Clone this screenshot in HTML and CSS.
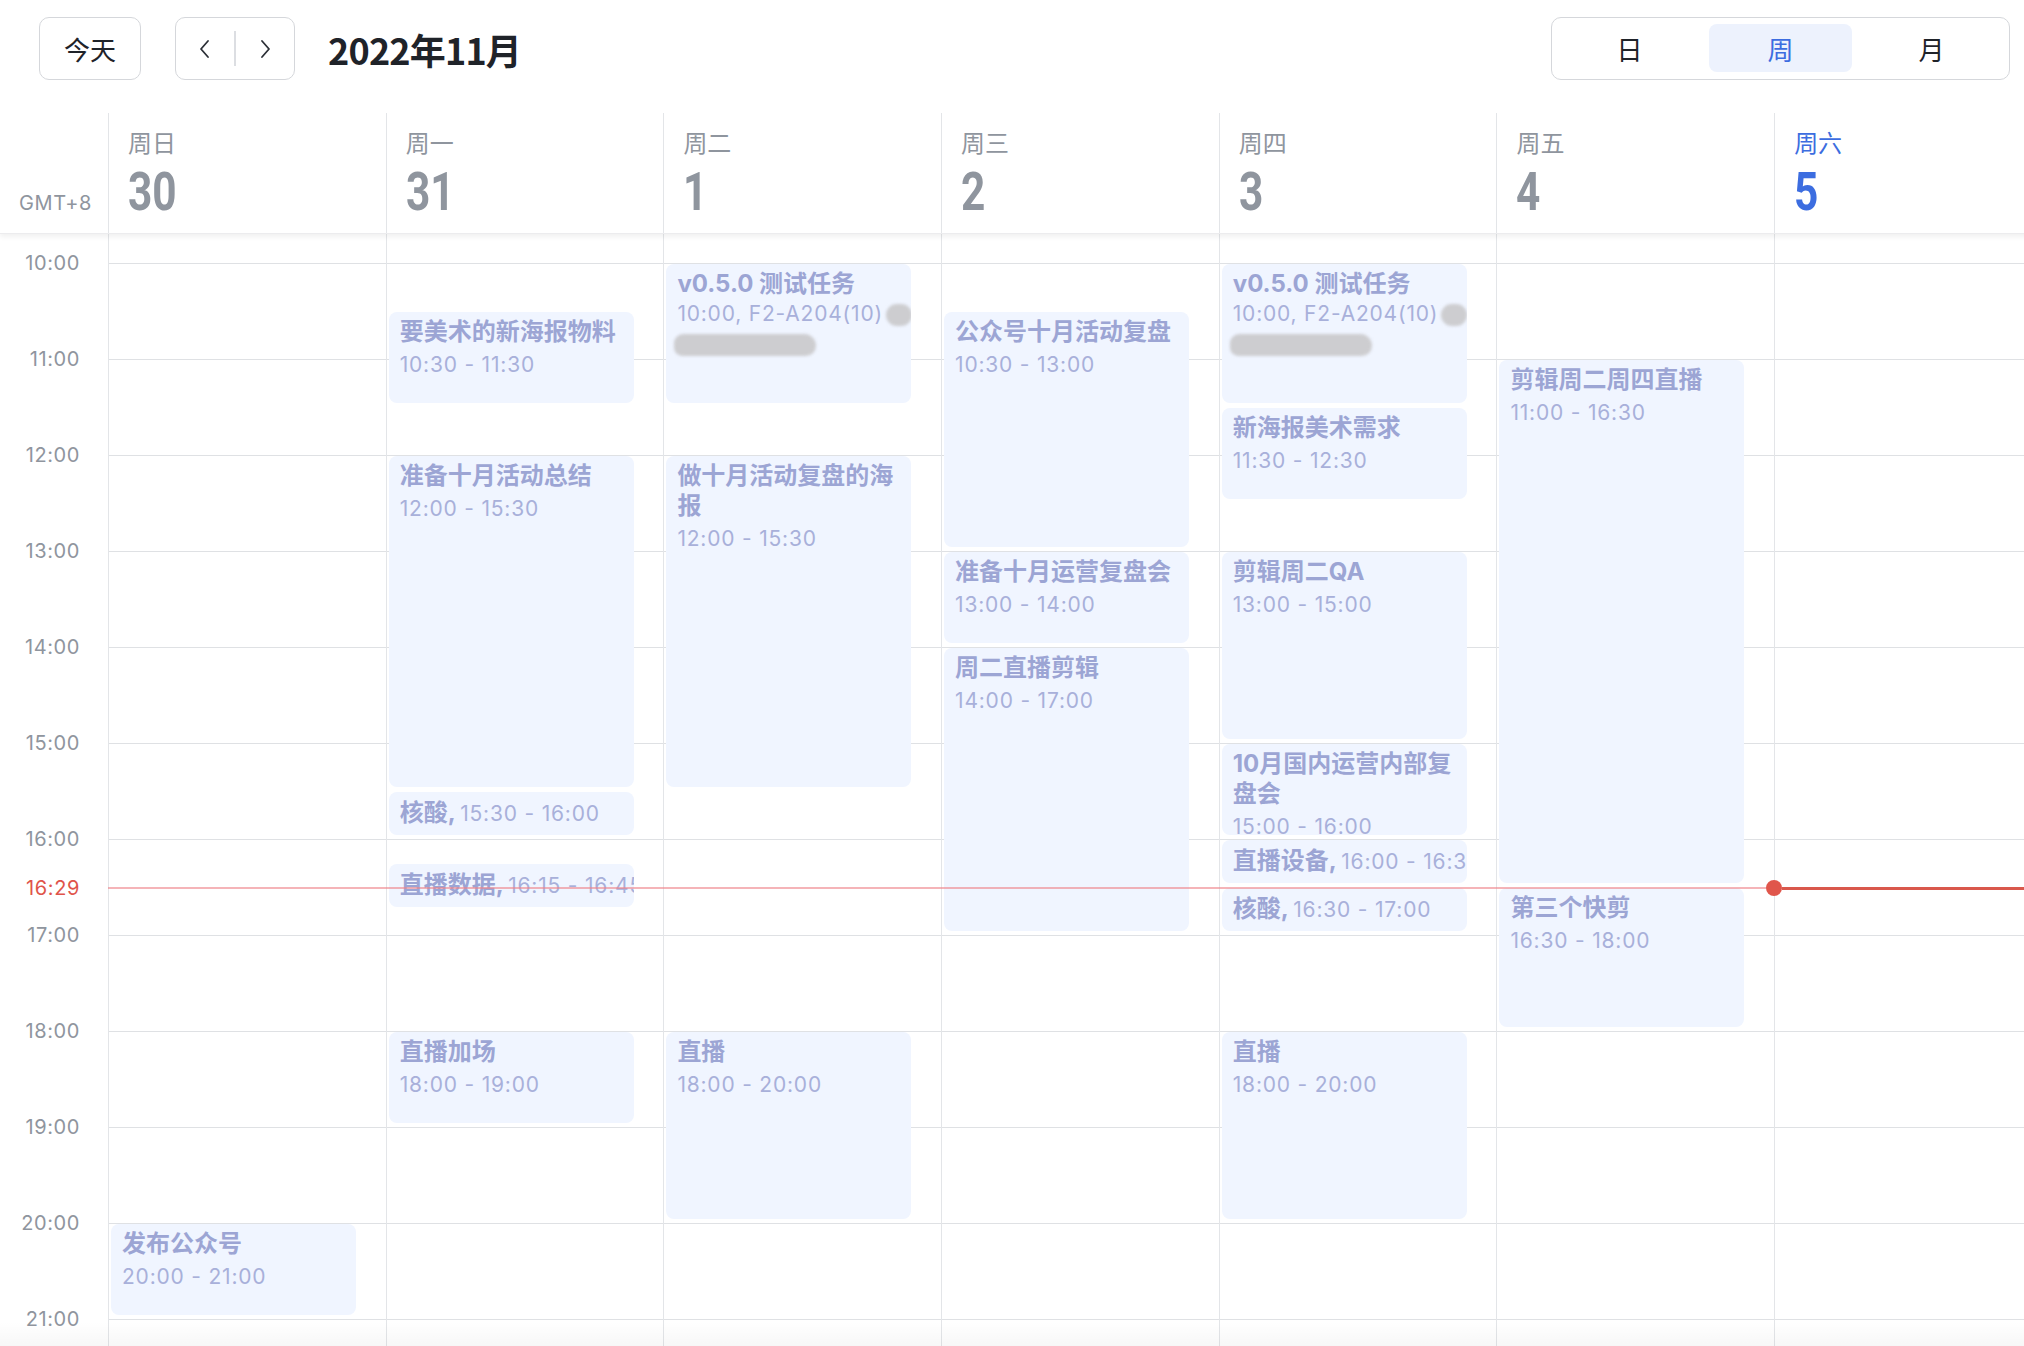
FILE: index.html
```html
<!DOCTYPE html>
<html lang="zh-CN">
<head>
<meta charset="utf-8">
<title>日历 - 2022年11月</title>
<link rel="stylesheet" href="styles.css">
</head>
<body>
<div class="app">
  <header class="toolbar">
    <button class="btn today">今天</button>
    <div class="btn nav">
      <span class="nav-half">
        <svg width="14" height="20" viewBox="0 0 14 20"><polyline points="10,2 3,10 10,18" fill="none" stroke="#2b2f36" stroke-width="1.8" stroke-linecap="round" stroke-linejoin="round"/></svg>
      </span>
      <span class="nav-divider"></span>
      <span class="nav-half">
        <svg width="14" height="20" viewBox="0 0 14 20"><polyline points="4,2 11,10 4,18" fill="none" stroke="#2b2f36" stroke-width="1.8" stroke-linecap="round" stroke-linejoin="round"/></svg>
      </span>
    </div>
    <h1 class="title">2022年11月</h1>
    <div class="spacer"></div>
    <div class="segmented">
      <span class="seg">日</span>
      <span class="seg active">周</span>
      <span class="seg">月</span>
    </div>
  </header>

  <div class="calendar">
    <div class="week-head">
      <div class="gutter-head">GMT+8</div>
      <div class="day-head"><div class="wd">周日</div><div class="dn"><span>30</span></div></div>
      <div class="day-head"><div class="wd">周一</div><div class="dn"><span>31</span></div></div>
      <div class="day-head"><div class="wd">周二</div><div class="dn"><span>1</span></div></div>
      <div class="day-head"><div class="wd">周三</div><div class="dn"><span>2</span></div></div>
      <div class="day-head"><div class="wd">周四</div><div class="dn"><span>3</span></div></div>
      <div class="day-head"><div class="wd">周五</div><div class="dn"><span>4</span></div></div>
      <div class="day-head today-head"><div class="wd">周六</div><div class="dn"><span>5</span></div></div>
    </div>

    <div class="week-body">
      <div class="gutter">
        <div class="gutter-top"></div>
        <div class="hour-label">10:00</div>
        <div class="hour-label">11:00</div>
        <div class="hour-label">12:00</div>
        <div class="hour-label">13:00</div>
        <div class="hour-label">14:00</div>
        <div class="hour-label">15:00</div>
        <div class="hour-label">16:00</div>
        <div class="hour-label">17:00</div>
        <div class="hour-label">18:00</div>
        <div class="hour-label">19:00</div>
        <div class="hour-label">20:00</div>
        <div class="hour-label">21:00</div>
        <div class="now-label">16:29</div>
      </div>

      <div class="lines">
        <div class="hline"></div><div class="hline"></div><div class="hline"></div>
        <div class="hline"></div><div class="hline"></div><div class="hline"></div>
        <div class="hline"></div><div class="hline"></div><div class="hline"></div>
        <div class="hline"></div><div class="hline"></div><div class="hline"></div>
      </div>

      <!-- 周日 -->
      <div class="day d1">
        <div class="event" style="top:990px;height:91px"><div class="ev-title">发布公众号</div><div class="ev-time">20:00 - 21:00</div></div>
      </div>

      <!-- 周一 -->
      <div class="day d2">
        <div class="event" style="top:78px;height:91px"><div class="ev-title">要美术的新海报物料</div><div class="ev-time">10:30 - 11:30</div></div>
        <div class="event" style="top:222px;height:331px"><div class="ev-title">准备十月活动总结</div><div class="ev-time">12:00 - 15:30</div></div>
        <div class="event inline" style="top:558px;height:43px"><span class="ev-title">核酸,</span> <span class="ev-time">15:30 - 16:00</span></div>
        <div class="event inline" style="top:630px;height:43px"><span class="ev-title">直播数据,</span> <span class="ev-time">16:15 - 16:45</span></div>
        <div class="event" style="top:798px;height:91px"><div class="ev-title">直播加场</div><div class="ev-time">18:00 - 19:00</div></div>
      </div>

      <!-- 周二 -->
      <div class="day d3">
        <div class="event" style="top:30px;height:139px">
          <div class="ev-title">v0.5.0 测试任务</div>
          <div class="ev-desc">10:00, F2-A204(10)<span class="blur small"></span></div>
          <div class="ev-desc"><span class="blur wide"></span></div>
        </div>
        <div class="event" style="top:222px;height:331px"><div class="ev-title">做十月活动复盘的海报</div><div class="ev-time">12:00 - 15:30</div></div>
        <div class="event" style="top:798px;height:187px"><div class="ev-title">直播</div><div class="ev-time">18:00 - 20:00</div></div>
      </div>

      <!-- 周三 -->
      <div class="day d4">
        <div class="event" style="top:78px;height:235px"><div class="ev-title">公众号十月活动复盘</div><div class="ev-time">10:30 - 13:00</div></div>
        <div class="event" style="top:318px;height:91px"><div class="ev-title">准备十月运营复盘会</div><div class="ev-time">13:00 - 14:00</div></div>
        <div class="event" style="top:414px;height:283px"><div class="ev-title">周二直播剪辑</div><div class="ev-time">14:00 - 17:00</div></div>
      </div>

      <!-- 周四 -->
      <div class="day d5">
        <div class="event" style="top:30px;height:139px">
          <div class="ev-title">v0.5.0 测试任务</div>
          <div class="ev-desc">10:00, F2-A204(10)<span class="blur small"></span></div>
          <div class="ev-desc"><span class="blur wide"></span></div>
        </div>
        <div class="event" style="top:174px;height:91px"><div class="ev-title">新海报美术需求</div><div class="ev-time">11:30 - 12:30</div></div>
        <div class="event" style="top:318px;height:187px"><div class="ev-title">剪辑周二QA</div><div class="ev-time">13:00 - 15:00</div></div>
        <div class="event" style="top:510px;height:91px"><div class="ev-title">10月国内运营内部复盘会</div><div class="ev-time">15:00 - 16:00</div></div>
        <div class="event inline" style="top:606px;height:43px"><span class="ev-title">直播设备,</span> <span class="ev-time">16:00 - 16:30</span></div>
        <div class="event inline" style="top:654px;height:43px"><span class="ev-title">核酸,</span> <span class="ev-time">16:30 - 17:00</span></div>
        <div class="event" style="top:798px;height:187px"><div class="ev-title">直播</div><div class="ev-time">18:00 - 20:00</div></div>
      </div>

      <!-- 周五 -->
      <div class="day d6">
        <div class="event" style="top:126px;height:523px"><div class="ev-title">剪辑周二周四直播</div><div class="ev-time">11:00 - 16:30</div></div>
        <div class="event" style="top:654px;height:139px"><div class="ev-title">第三个快剪</div><div class="ev-time">16:30 - 18:00</div></div>
      </div>

      <!-- 周六 -->
      <div class="day d7"></div>

      <div class="now-line">
        <div class="now-past"></div>
        <div class="now-dot"></div>
        <div class="now-today"></div>
      </div>
      <div class="bottom-fade"></div>
    </div>
  </div>
</div>
</body>
</html>
```

FILE: styles.css
```css
* {
  box-sizing: border-box;
}

html, body {
  margin: 0;
  padding: 0;
  background: #ffffff;
}

body {
  font-family: "Inter", "Noto Sans CJK SC", "Noto Sans", sans-serif;
  color: #1f2329;
}

.app {
  height: 100vh;
  display: flex;
  flex-direction: column;
  overflow: hidden;
}

/* ---------- toolbar ---------- */
.toolbar {
  display: flex;
  align-items: center;
  height: 63px;
  margin: 17px 14px 33px 39px;
  flex: none;
}

.btn {
  height: 63px;
  border: 1.5px solid #d5d7db;
  border-radius: 10px;
  background: #ffffff;
  display: flex;
  align-items: center;
  justify-content: center;
  font-family: inherit;
  padding: 0;
}

.today {
  width: 102px;
  font-size: 26px;
  color: #1f2329;
}

.nav {
  width: 120px;
  margin-left: 34px;
}

.nav-half {
  flex: 1;
  display: flex;
  align-items: center;
  justify-content: center;
  height: 100%;
}

.nav-divider {
  width: 1.5px;
  height: 35px;
  background: #dcdee2;
}

.title {
  margin: 0 0 0 33px;
  font-family: "Noto Sans CJK SC", sans-serif;
  font-size: 36px;
  font-weight: 700;
  color: #1f2329;
  letter-spacing: -0.8px;
}

.spacer {
  flex: 1;
}

.segmented {
  display: flex;
  gap: 8px;
  padding: 6px;
  border: 1.5px solid #d5d7db;
  border-radius: 10px;
  height: 63px;
}

.seg {
  width: 143px;
  height: 48px;
  border-radius: 8px;
  display: flex;
  align-items: center;
  justify-content: center;
  font-size: 26px;
  color: #1f2329;
}

.seg.active {
  background: #edf2fd;
  color: #3c6de0;
}

/* ---------- calendar ---------- */
.calendar {
  flex: 1;
  display: flex;
  flex-direction: column;
  overflow: hidden;
  min-height: 0;
}

.week-head,
.week-body {
  display: grid;
  grid-template-columns: 108px repeat(7, 277.7px);
  width: 2052px;
  flex: none;
}

.week-head {
  height: 121px;
  position: relative;
  z-index: 3;
  background: #ffffff;
  box-shadow: 0 3px 5px rgba(0, 0, 0, 0.06);
  border-bottom: 1px solid #ececee;
}

.gutter-head {
  display: flex;
  align-items: flex-end;
  justify-content: flex-end;
  padding: 0 16px 18px 0;
  font-size: 20px;
  letter-spacing: 0.6px;
  color: #8f959e;
  line-height: 24px;
}

.day-head {
  border-left: 1px solid #e3e5e8;
  padding: 14px 0 0 19px;
}

.wd {
  font-family: "Noto Sans CJK SC", sans-serif;
  font-size: 24px;
  line-height: 30px;
  color: #8f959e;
}

.dn {
  margin-top: 7px;
  height: 56px;
  line-height: 56px;
}

.dn span {
  display: inline-block;
  font-family: "Roboto", sans-serif;
  font-size: 53px;
  font-weight: 700;
  color: #8f959e;
  transform: scaleX(0.8);
  transform-origin: left center;
}

.today-head .wd,
.today-head .dn span {
  color: #3c6de0;
}

.week-body {
  flex: 1;
  position: relative;
  overflow: hidden;
  grid-template-rows: 100%;
}

.gutter {
  grid-column: 1;
  grid-row: 1;
  position: relative;
}

.gutter-top {
  height: 17px;
}

.hour-label {
  height: 96px;
  line-height: 24px;
  font-size: 20px;
  letter-spacing: 0.6px;
  color: #8f959e;
  text-align: right;
  padding-right: 28px;
}

.now-label {
  position: absolute;
  top: 642px;
  right: 28px;
  line-height: 24px;
  font-size: 20px;
  letter-spacing: 0.6px;
  color: #e0544a;
  background: #ffffff;
}

.lines {
  grid-column: 2 / -1;
  grid-row: 1;
  padding-top: 29px;
}

.hline {
  height: 96px;
  border-top: 1px solid #dfe1e4;
}

.day {
  grid-row: 1;
  position: relative;
  border-left: 1px solid #e3e5e8;
}

.d1 { grid-column: 2; }
.d2 { grid-column: 3; }
.d3 { grid-column: 4; }
.d4 { grid-column: 5; }
.d5 { grid-column: 6; }
.d6 { grid-column: 7; }
.d7 { grid-column: 8; }

.event {
  position: absolute;
  left: 2px;
  width: 245px;
  background: #f0f5ff;
  border-radius: 8px;
  padding: 5px 4px 0 11px;
  overflow: hidden;
}

.ev-title {
  font-size: 24px;
  line-height: 30px;
  font-weight: 700;
  color: #9ca5d4;
}

.ev-time {
  margin-top: 3px;
  font-size: 21px;
  letter-spacing: 0.8px;
  line-height: 30px;
  color: #a8b0da;
}

.ev-desc {
  font-size: 21px;
  letter-spacing: 0.8px;
  line-height: 30px;
  color: #a8b0da;
  white-space: nowrap;
}

.event.inline {
  white-space: nowrap;
  padding-top: 6px;
}

.event.inline .ev-title,
.event.inline .ev-time {
  display: inline;
  margin: 0;
}

.blur {
  display: inline-block;
  vertical-align: middle;
  background: #cdcdd0;
  filter: blur(1.8px);
}

.blur.small {
  width: 26px;
  height: 22px;
  margin-left: 3px;
  border-radius: 12px;
}

.blur.wide {
  width: 142px;
  height: 22px;
  margin-left: -3px;
  border-radius: 11px 14px 12px 10px;
}

/* now indicator */
.now-line {
  position: absolute;
  top: 653px;
  left: 108px;
  right: 0;
  height: 16px;
  margin-top: -7px;
  display: flex;
  align-items: center;
  z-index: 2;
  pointer-events: none;
}

.now-past {
  width: 1658px;
  flex: none;
  height: 2px;
  background: rgba(238, 130, 136, 0.6);
}

.now-dot {
  width: 16px;
  height: 16px;
  border-radius: 50%;
  background: #e0564b;
  flex: none;
}

.now-today {
  flex: 1;
  height: 3px;
  background: #d9584c;
}

.bottom-fade {
  position: absolute;
  left: 0;
  right: 0;
  bottom: 0;
  height: 24px;
  background: linear-gradient(to bottom, rgba(0, 0, 0, 0), rgba(0, 0, 0, 0.03));
  pointer-events: none;
}
```
